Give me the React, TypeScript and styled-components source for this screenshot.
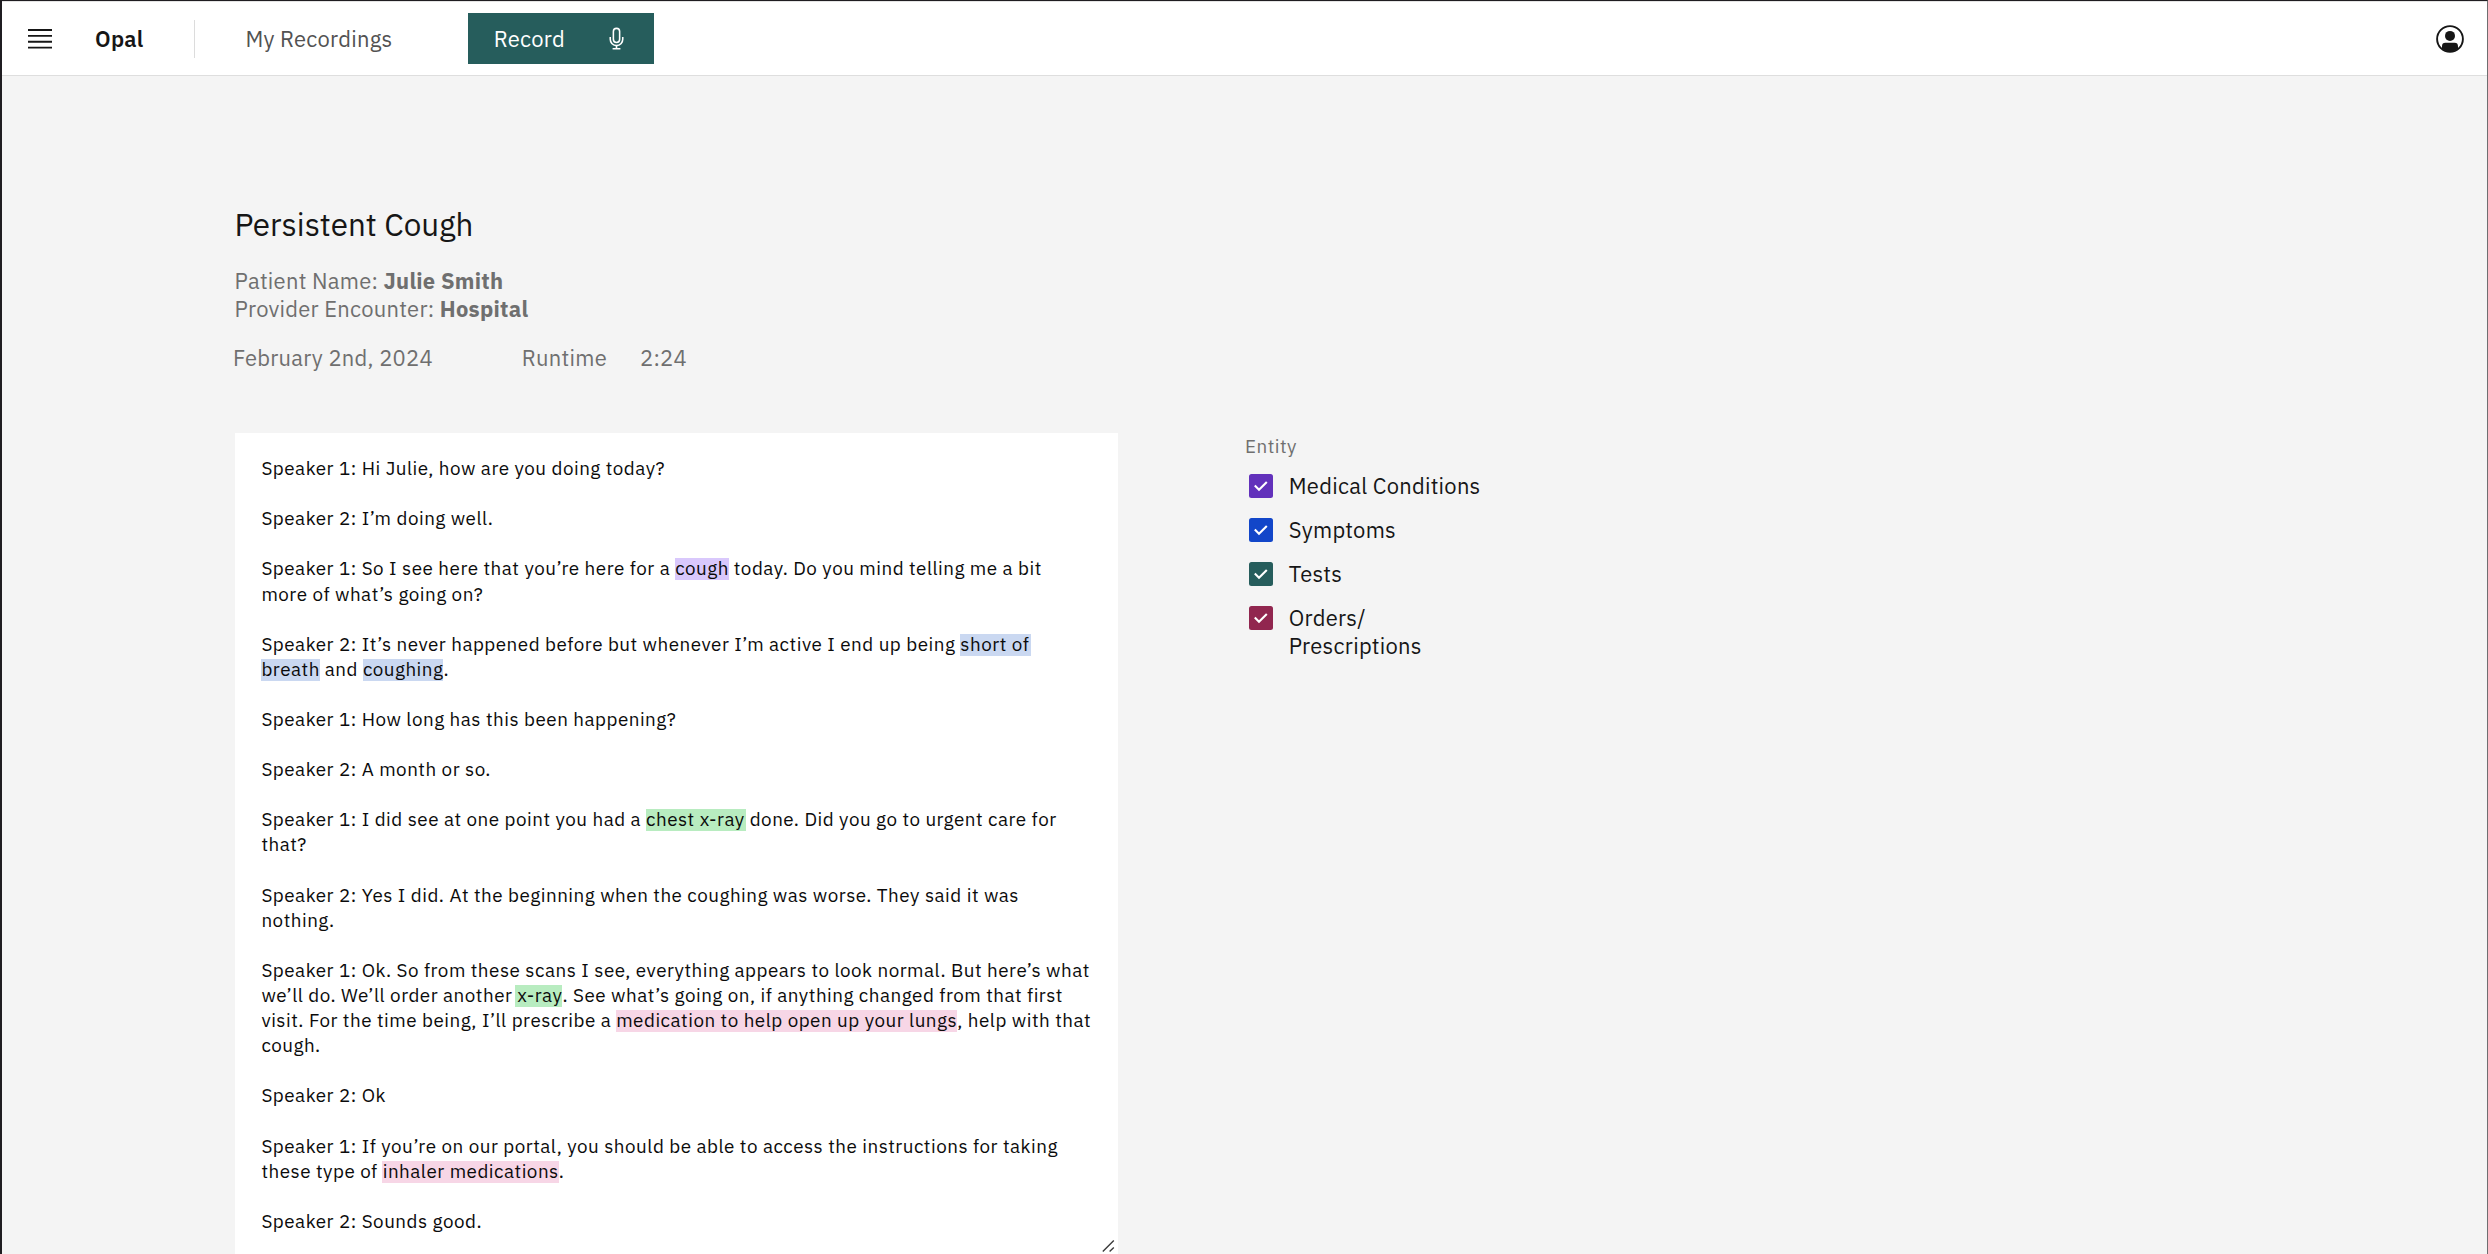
import React from "react";
import styled, { createGlobalStyle } from "styled-components";

const GlobalStyle = createGlobalStyle`
  * { box-sizing: border-box; }
  html, body { margin: 0; padding: 0; background: #f4f4f4; }
  body {
    font-family: "IBM Plex Sans", "Noto Sans", "Open Sans", sans-serif;
    font-size: 21.96px;
    letter-spacing: 0.25px;
    color: #161616;
    overflow: hidden;
  }
  h1, p { margin: 0; font-weight: 400; }
`;

const Page = styled.div`
  display: flex;
  flex-direction: column;
  height: 1254px;
  overflow: hidden;
  background: #f4f4f4;
  border-top: 1px solid #1f1d21;
  border-left: 2px solid #1f1d21;
  border-right: 1px solid #6e6e70;
`;

const Header = styled.header`
  display: flex;
  align-items: center;
  flex: none;
  height: 75px;
  padding: 0 23px 0 26px;
  background: #ffffff;
  border-top: 1px solid #e4e4e4;
  border-bottom: 1px solid #dedede;
`;

const MenuButton = styled.div`
  display: flex;
  width: 24px;
  margin-right: 43px;
`;

const Brand = styled.div`
  width: 99.2px;
  font-weight: 600;
`;

const Divider = styled.div`
  width: 1px;
  height: 38px;
  margin-right: 50.2px;
  background: #dcdcdc;
`;

const NavLink = styled.a`
  width: 222.6px;
  color: #525252;
`;

const RecordButton = styled.div`
  display: flex;
  align-items: center;
  justify-content: space-between;
  width: 186px;
  height: 51px;
  padding: 0 25px 0 25.8px;
  background: #265d5c;
  color: #ffffff;
`;

const Account = styled.div`
  display: flex;
  margin-left: auto;
`;

const Main = styled.main`
  display: flex;
  flex-direction: column;
  flex: 1;
  min-height: 0;
  padding: 128.5px 0 0 233px;
`;

const Title = styled.h1`
  height: 40px;
  line-height: 40px;
  margin-left: -0.6px;
  font-size: 31.4px;
  letter-spacing: 0;
`;

const Details = styled.div`
  margin: 22px 0 19.6px -0.4px;
  color: #6f6f6f;
`;

const Detail = styled.p`
  height: 28.3px;
  line-height: 28.3px;
  white-space: pre;
`;

const Meta = styled.div`
  display: grid;
  grid-template-columns: 288.8px 118.2px auto;
  height: 28px;
  line-height: 29px;
  margin: 0 0 62px -2px;
  color: #6f6f6f;
`;

const Columns = styled.div`
  display: flex;
  flex: 1;
  min-height: 0;
`;

const Transcript = styled.section`
  position: relative;
  width: 883px;
  padding: 23.4px 0 0 26.4px;
  background: #ffffff;
  color: #0b0b0b;
  font-size: 18.83px;
  letter-spacing: 0.5px;
`;

const Turn = styled.p`
  margin-bottom: 25.1px;
`;

const Line = styled.span`
  display: block;
  height: 25.1px;
  line-height: 25.1px;
  white-space: pre;
`;

type Entity = "condition" | "symptom" | "test" | "order";

const tint: Record<Entity, string> = {
  condition: "#d9c8fc",
  symptom: "#cad8f1",
  test: "#b8ecc0",
  order: "#f7d6e6",
};

const shade: Record<Entity, string> = {
  condition: "#6231bb",
  symptom: "#1246c9",
  test: "#265d5c",
  order: "#91264f",
};

const Mark = styled.mark<{ $entity: Entity; $before: number; $after: number }>`
  display: inline-block;
  height: 22px;
  line-height: 20.4px;
  padding: 0 ${(p) => p.$after}px 0 ${(p) => p.$before}px;
  margin: 0 ${(p) => -p.$after}px 0 ${(p) => -p.$before}px;
  background: ${(p) => tint[p.$entity]};
  color: inherit;
`;

const Grip = styled.svg`
  position: absolute;
  right: 3px;
  bottom: 1px;
`;

const Filters = styled.aside`
  display: flex;
  flex-direction: column;
  margin-left: 126px;
  padding-top: 1.2px;
`;

const Legend = styled.div`
  height: 25px;
  line-height: 25px;
  margin: 0 0 12.3px 1px;
  font-size: 18.83px;
  letter-spacing: 0.5px;
  color: #6f6f6f;
`;

const Options = styled.div`
  display: flex;
  flex-direction: column;
  gap: 15.7px;
`;

const Option = styled.label`
  display: flex;
  align-items: flex-start;
  height: 28.3px;
  padding-left: 5px;
`;

const Box = styled.span<{ $entity: Entity }>`
  display: flex;
  width: 23.6px;
  height: 23.6px;
  margin: 2.8px 16.2px 0 0;
  border-radius: 2.5px;
  background: ${(p) => shade[p.$entity]};
`;

const OptionLabel = styled.span`
  padding-top: 0.8px;
  line-height: 28.3px;
  white-space: pre;
`;

interface Highlight {
  text: string;
  entity: Entity;
  before?: number;
  after?: number;
}

type Run = string | Highlight;

const transcript: Run[][][] = [
  [["Speaker 1: Hi Julie, how are you doing today?"]],
  [["Speaker 2: I’m doing well."]],
  [
    ["Speaker 1: So I see here that you’re here for a ", { text: "cough", entity: "condition" }, " today. Do you mind telling me a bit"],
    ["more of what’s going on?"],
  ],
  [
    ["Speaker 2: It’s never happened before but whenever I’m active I end up being ", { text: "short of", entity: "symptom", before: 0.5, after: 2 }],
    [{ text: "breath", entity: "symptom" }, " and ", { text: "coughing", entity: "symptom" }, "."],
  ],
  [["Speaker 1: How long has this been happening?"]],
  [["Speaker 2: A month or so."]],
  [
    ["Speaker 1: I did see at one point you had a ", { text: "chest x-ray", entity: "test", after: 1.5 }, " done. Did you go to urgent care for"],
    ["that?"],
  ],
  [
    ["Speaker 2: Yes I did. At the beginning when the coughing was worse. They said it was"],
    ["nothing."],
  ],
  [
    ["Speaker 1: Ok. So from these scans I see, everything appears to look normal. But here’s what"],
    ["we’ll do. We’ll order another ", { text: "x-ray", entity: "test", before: 2 }, ". See what’s going on, if anything changed from that first"],
    ["visit. For the time being, I’ll prescribe a ", { text: "medication to help open up your lungs", entity: "order" }, ", help with that"],
    ["cough."],
  ],
  [["Speaker 2: Ok"]],
  [
    ["Speaker 1: If you’re on our portal, you should be able to access the instructions for taking"],
    ["these type of ", { text: "inhaler medications", entity: "order", before: 1 }, "."],
  ],
  [["Speaker 2: Sounds good."]],
];

const options: { entity: Entity; label: string }[] = [
  { entity: "condition", label: "Medical Conditions" },
  { entity: "symptom", label: "Symptoms" },
  { entity: "test", label: "Tests" },
  { entity: "order", label: "Orders/\nPrescriptions" },
];

function RunText({ run }: { run: Run }) {
  if (typeof run === "string") return <>{run}</>;
  return (
    <Mark $entity={run.entity} $before={run.before ?? 0} $after={run.after ?? 0}>
      {run.text}
    </Mark>
  );
}

const MenuIcon = () => (
  <svg width="24" height="20" viewBox="0 0 24 20">
    <path d="M0 1h24M0 6.9h24M0 12.7h24M0 18.6h24" stroke="#161616" strokeWidth="1.9" />
  </svg>
);

const MicIcon = () => (
  <svg width="25" height="25" viewBox="0 0 32 32" fill="#ffffff">
    <path d="M23,14v3A7,7,0,0,1,9,17V14H7v3a9,9,0,0,0,8,8.94V28H11v2H21V28H17V25.94A9,9,0,0,0,25,17V14Z" />
    <path d="M16,22a5,5,0,0,0,5-5V7A5,5,0,0,0,11,7V17A5,5,0,0,0,16,22ZM13,7a3,3,0,0,1,6,0V17a3,3,0,0,1-6,0Z" />
  </svg>
);

const AccountIcon = () => (
  <svg width="28" height="28" viewBox="0 0 28 28">
    <circle cx="14" cy="14" r="12.9" fill="none" stroke="#161616" strokeWidth="1.9" />
    <circle cx="14" cy="10.9" r="5" fill="#161616" />
    <path d="M6 24V21.2a3.4 3.4 0 0 1 3.4-3.4h9.2a3.4 3.4 0 0 1 3.4 3.4V24A13 13 0 0 1 6 24Z" fill="#161616" />
  </svg>
);

const CheckIcon = () => (
  <svg width="23.6" height="23.6" viewBox="0 0 23.6 23.6">
    <path d="M5.8 11.6L10 15.8L17.8 8" fill="none" stroke="#ffffff" strokeWidth="2.1" />
  </svg>
);

export default function App() {
  return (
    <Page>
      <GlobalStyle />
      <Header>
        <MenuButton>
          <MenuIcon />
        </MenuButton>
        <Brand>Opal</Brand>
        <Divider />
        <NavLink>My Recordings</NavLink>
        <RecordButton>
          Record
          <MicIcon />
        </RecordButton>
        <Account>
          <AccountIcon />
        </Account>
      </Header>
      <Main>
        <Title>Persistent Cough</Title>
        <Details>
          <Detail>
            Patient Name: <b>Julie Smith</b>
          </Detail>
          <Detail>
            Provider Encounter: <b>Hospital</b>
          </Detail>
        </Details>
        <Meta>
          <span>February 2nd, 2024</span>
          <span>Runtime</span>
          <span>2:24</span>
        </Meta>
        <Columns>
          <Transcript>
            {transcript.map((turn, i) => (
              <Turn key={i}>
                {turn.map((line, j) => (
                  <Line key={j}>
                    {line.map((run, k) => (
                      <RunText key={k} run={run} />
                    ))}
                  </Line>
                ))}
              </Turn>
            ))}
            <Grip width="14" height="14" viewBox="0 0 14 14">
              <path d="M1.8 12.6L12.8 1.6M8.6 12.6L12.8 8.4" stroke="#3c3c3c" strokeWidth="1.4" />
            </Grip>
          </Transcript>
          <Filters>
            <Legend>Entity</Legend>
            <Options>
              {options.map(({ entity, label }) => (
                <Option key={entity}>
                  <Box $entity={entity}>
                    <CheckIcon />
                  </Box>
                  <OptionLabel>{label}</OptionLabel>
                </Option>
              ))}
            </Options>
          </Filters>
        </Columns>
      </Main>
    </Page>
  );
}
